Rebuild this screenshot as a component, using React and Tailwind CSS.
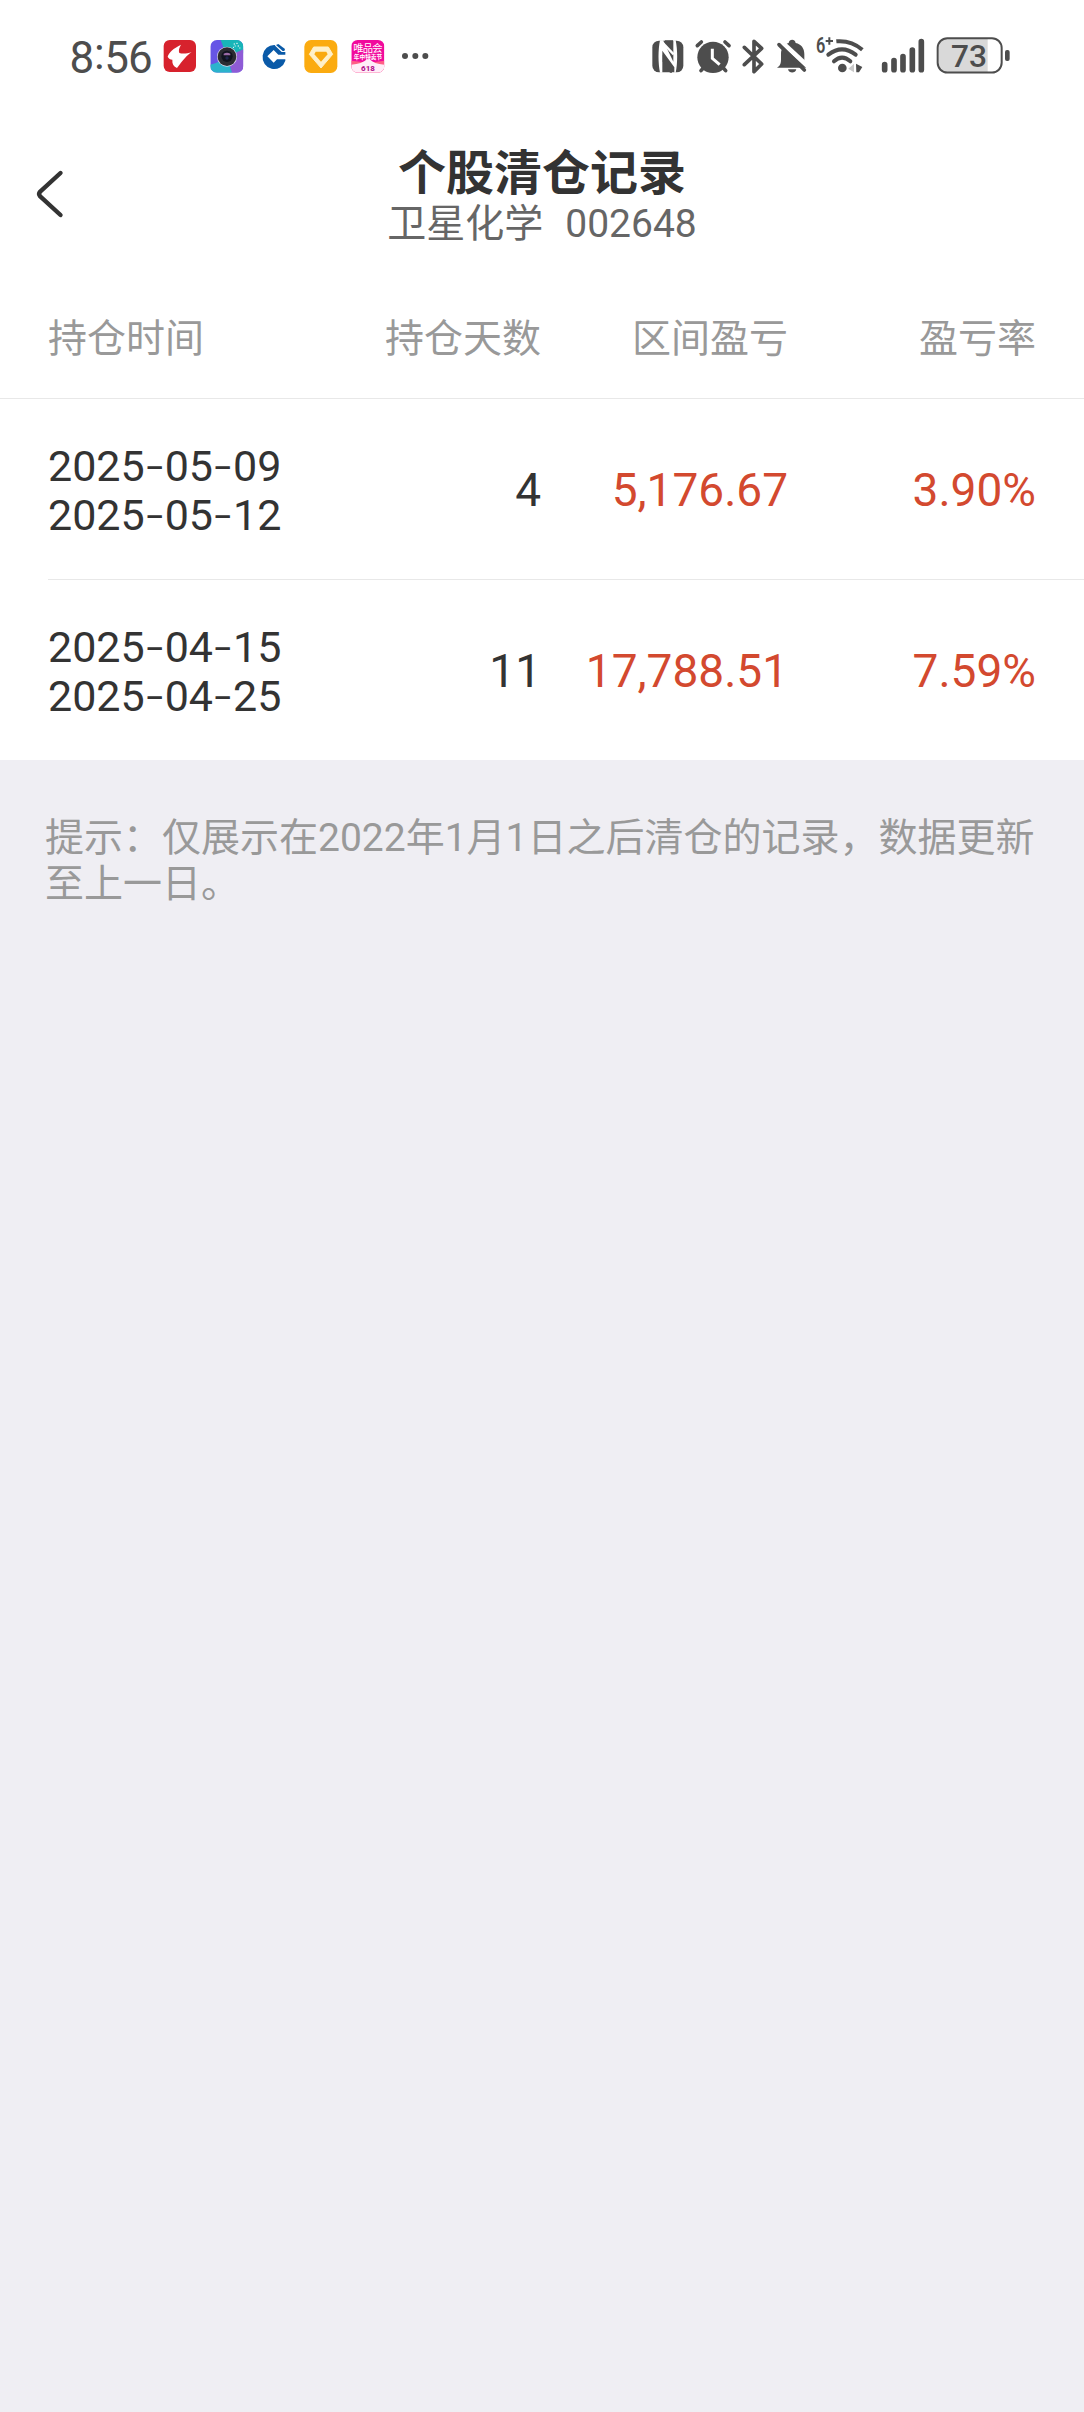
import React from "react";

const INK = "#4d4d4d";

// Every status glyph shares one 70px tall band, drawn at three units per pixel.
function Glyph({ x, w, children, label }) {
  return (
    <svg
      aria-label={label}
      className="block h-[70px] shrink-0"
      width={w / 3}
      height="70"
      viewBox={`${x} 0 ${w} 210`}
    >
      {children}
    </svg>
  );
}

function StatusLeft() {
  return (
    <div className="flex items-start">
      <div className="flex h-[75px] w-[93px] items-center text-[44px] leading-none font-normal tracking-[-1px] text-[#4d4d4d]">
        <span>8</span>
        <span className="-mt-2 w-[11px] text-center">:</span>
        <span>56</span>
      </div>
      <Glyph x={338} w={141} label="交易">
        <rect x="340" y="60" width="97" height="96" rx="18" fill="#d7222d" />
        <path d="M352 110 C357 96 368 86 392 74 C386 84 384 92 387 99 C396 102 410 101 424 97 C410 105 398 121 380 144 C370 140 365 132 366 119 C360 119 355 116 352 110Z" fill="#fff" />
      </Glyph>
      <Glyph x={479} w={141} label="相机">
        <defs>
          <clipPath id="cam"><rect x="480" y="60" width="99" height="98" rx="20" /></clipPath>
        </defs>
        <g clipPath="url(#cam)">
          <rect x="480" y="60" width="99" height="98" fill="#6655e6" />
          <path d="M511 60H579V100L530 110Z" fill="#18b5b8" />
          <path d="M579 88L530 110L545 158H579Z" fill="#8e5bd6" />
          <path d="M480 134C500 128 520 120 530 110L545 158H480Z" fill="#2bb3cc" />
          <path d="M550 72h4M558 70h4M553 78h3M562 78h4M567 84h3M548 82h3" stroke="#fff" strokeWidth="3" />
        </g>
        <circle cx="530" cy="110" r="30" fill="#d8d4e6" />
        <circle cx="530" cy="110" r="28" fill="#2b2b33" />
        <circle cx="530" cy="109" r="17" fill="#111420" />
        <path d="M520 101Q530 96 540 101V106H520Z" fill="#9a6aa6" />
        <circle cx="530" cy="114" r="5" fill="#20264f" />
      </Glyph>
      <Glyph x={50} w={141} label="银行">
        <path d="M103 75A35 36 0 1 0 135 122V118H110L100 128L81 109L100 90L114 104H135V96H124L106 79Z" fill="#0a5aa8" />
        <path d="M107 75L114 72L134 87L132 93H127Z" fill="#0a5aa8" />
      </Glyph>
      <Glyph x={191} w={141} label="会员">
        <rect x="192" y="60" width="99" height="99" rx="20" fill="#fbab10" />
        <path d="M220 81H264L277 103L242 144L207 103Z" fill="#fff0c8" stroke="#fff0c8" strokeWidth="3" strokeLinejoin="round" />
        <path d="M226 95H258L262 103L242 125L222 103Z" fill="#f9a90f" />
      </Glyph>
      <Glyph x={332} w={141} label="唯品会">
        <defs>
          <clipPath id="vip"><rect x="333" y="60" width="99" height="98" rx="19" /></clipPath>
        </defs>
        <g clipPath="url(#vip)">
          <rect x="333" y="60" width="99" height="98" fill="#f10a9c" />
          <path d="M333 122L386 128L432 122V158H333Z" fill="#ff5f86" />
          <path d="M333 134Q365 132 380 118H388Q400 132 432 134V158H333Z" fill="#ffeef8" />
        </g>
        <text x="383" y="96" textAnchor="middle" fontSize="31" fontWeight="400" fill="#fff" fontFamily="Noto Sans CJK SC, sans-serif" textLength="88">唯品会</text>
        <text x="383" y="116" textAnchor="middle" fontSize="17" fontWeight="700" fill="#fff" fontFamily="Noto Sans CJK SC, sans-serif">年中特卖节</text>
        <text x="383" y="153" textAnchor="middle" fontSize="24" fontWeight="800" fill="#b3128c" fontFamily="Roboto, sans-serif">618</text>
      </Glyph>
      <Glyph x={473} w={100} label="更多">
        <circle cx="494" cy="108" r="9" fill={INK} />
        <circle cx="525" cy="108" r="9" fill={INK} />
        <circle cx="555" cy="108" r="9" fill={INK} />
      </Glyph>
    </div>
  );
}

function StatusRight() {
  return (
    <div className="flex items-start">
      <Glyph x={30} w={120} label="NFC">
        <rect x="37" y="62" width="93" height="95" rx="20" fill={INK} />
        <path d="M60 61C54 90 54 130 60 158H67V92L103 142V158H107C113 130 113 90 107 61H100V125L69 61Z" fill="#fff" />
        <path d="M68 104L96 140V158H90L68 124Z" fill={INK} />
        <path d="M74 61H99V97L82 82Z" fill={INK} />
        <path d="M66 66L101 103" stroke="#fff" strokeWidth="7" />
      </Glyph>
      <Glyph x={150} w={143} label="闹钟">
        <path d="M183 152L190 144M257 152L250 144M172 77L184 66M267 77L255 66" stroke={INK} strokeWidth="11" strokeLinecap="round" />
        <circle cx="219" cy="112" r="47" fill={INK} />
        <path d="M217 86V115L239 134" fill="none" stroke="#fff" strokeWidth="9" />
      </Glyph>
      <Glyph x={293} w={107} label="蓝牙">
        <path d="M315 82L367 132L344 155V64L367 85L315 134" fill="none" stroke={INK} strokeWidth="11" strokeLinecap="round" strokeLinejoin="round" />
      </Glyph>
      <Glyph x={400} w={130} label="静音">
        <path d="M412 143C421 138 424 132 424 118V102C424 84 435 72 447 69C449 56 466 56 468 69C485 73 494 85 494 102V118C494 134 494 138 500 143Z" fill={INK} />
        <path d="M445 148H470C467 161 448 161 445 148Z" fill={INK} />
        <path d="M422 62L508 142" stroke="#fff" strokeWidth="14" />
        <path d="M418 74L494 150" stroke={INK} strokeWidth="11" strokeLinecap="round" />
      </Glyph>
      <Glyph x={20} w={180} label="无线网络">
        <text x="20" y="100" fontSize="65" fontWeight="600" fill={INK} fontFamily="Roboto, sans-serif" textLength="28" lengthAdjust="spacingAndGlyphs">6</text>
        <path d="M49 63H71M60 52V74" stroke={INK} strokeWidth="6" />
        <g fill="none" stroke={INK} strokeWidth="12">
          <path d="M74 124Q98 102 123 124" strokeLinecap="round" />
          <path d="M57 104Q98 72 139 104" strokeLinecap="round" />
          <path d="M81 64Q125 60 159 89" />
        </g>
        <circle cx="99" cy="144" r="13" fill={INK} />
        <path d="M117 146L134 131V157Z" fill="#c9c9c9" />
        <path d="M140 131L159 141L149 157H141Z" fill={INK} />
      </Glyph>
      <Glyph x={200} w={170} label="信号">
        <g stroke={INK} strokeWidth="17" strokeLinecap="round">
          <path d="M226 134V149M254 122V149M281 110V149M309 90V149M336 65V149" />
        </g>
      </Glyph>
      <Glyph x={370} w={240} label="电量">
        <path d="M534 57H406Q387 57 387 78V136Q387 157 406 157H534Z" fill="#d9d9d9" />
        <rect x="384" y="54.5" width="192" height="103" rx="29" fill="none" stroke={INK} strokeWidth="6" />
        <rect x="586" y="90" width="14" height="33" rx="6" fill={INK} />
        <text x="478" y="140" textAnchor="middle" fontSize="95" fontWeight="500" fill={INK} fontFamily="Roboto, sans-serif">73</text>
      </Glyph>
    </div>
  );
}

function DateText({ value }) {
  const parts = value.split("-");
  return (
    <div className="h-[49px] leading-[49px] whitespace-nowrap">
      {parts.map((p, i) => (
        <React.Fragment key={i}>
          {i > 0 && (
            <span className="inline-block w-[20px] text-center font-[Inter,sans-serif] font-light">
              <span className="inline-block scale-x-110">-</span>
            </span>
          )}
          {p}
        </React.Fragment>
      ))}
    </div>
  );
}

const records = [
  { from: "2025-05-09", to: "2025-05-12", days: "4", profit: "5,176.67", rate: "3.90%" },
  { from: "2025-04-15", to: "2025-04-25", days: "11", profit: "17,788.51", rate: "7.59%" },
];

const columns = "grid grid-cols-[244px_249px_247px_248px] items-center pl-12";

export default function App() {
  return (
    <div className="min-h-[2412px] w-[1084px] overflow-hidden bg-[#efeef3] font-[Roboto,'Noto_Sans_CJK_SC',sans-serif] text-[#333333]">
      <div className="bg-white">
        <div className="flex h-[128px] items-start justify-between pt-5 pr-[71px] pl-[69.5px]">
          <StatusLeft />
          <StatusRight />
        </div>

        <header className="grid h-[152px] grid-cols-[120px_1fr_120px]">
          <button className="flex h-[131px] items-center pl-[34px]" aria-label="返回">
            <svg width="32" height="50" viewBox="0 0 32 50" fill="none" stroke="#333" strokeWidth="4.4" strokeLinecap="round" strokeLinejoin="round">
              <path d="M26.5 4L6.2 22.6Q4 25 6.2 27.4L26.5 46" />
            </svg>
          </button>
          <div className="flex flex-col items-center pt-4">
            <h1 className="h-[56px] text-[48px] leading-[60px] font-bold">个股清仓记录</h1>
            <div className="flex h-[48px] items-center gap-[22px] text-[39px] leading-[48px] text-[#666666]">
              <span>卫星化学</span>
              <span>002648</span>
            </div>
          </div>
        </header>

        <div className={`${columns} h-[119px] border-b border-[#e8e8e8] text-[39px] leading-[48px] text-[#999999]`}>
          <span>持仓时间</span>
          <span className="text-right">持仓天数</span>
          <span className="text-right">区间盈亏</span>
          <span className="text-right">盈亏率</span>
        </div>

        {records.map((r, i) => (
          <React.Fragment key={r.from}>
            {i > 0 && <div className="ml-12 h-px bg-[#e8e8e8]" />}
            <div className={`${columns} h-[180px] pt-0.5 text-[46px]`}>
              <div className="text-[43px]">
                <DateText value={r.from} />
                <DateText value={r.to} />
              </div>
              <span className="text-right">{r.days}</span>
              <span className="text-right text-[#d3492f]">{r.profit}</span>
              <span className="text-right text-[#d3492f]">{r.rate}</span>
            </div>
          </React.Fragment>
        ))}
      </div>

      <p className="px-[45px] pt-[55px] text-[39px] leading-[46px] text-[#999999]">
        提示：仅展示在2022年1月1日之后清仓的记录，数据更新
        <br />
        至上一日。
      </p>
    </div>
  );
}
